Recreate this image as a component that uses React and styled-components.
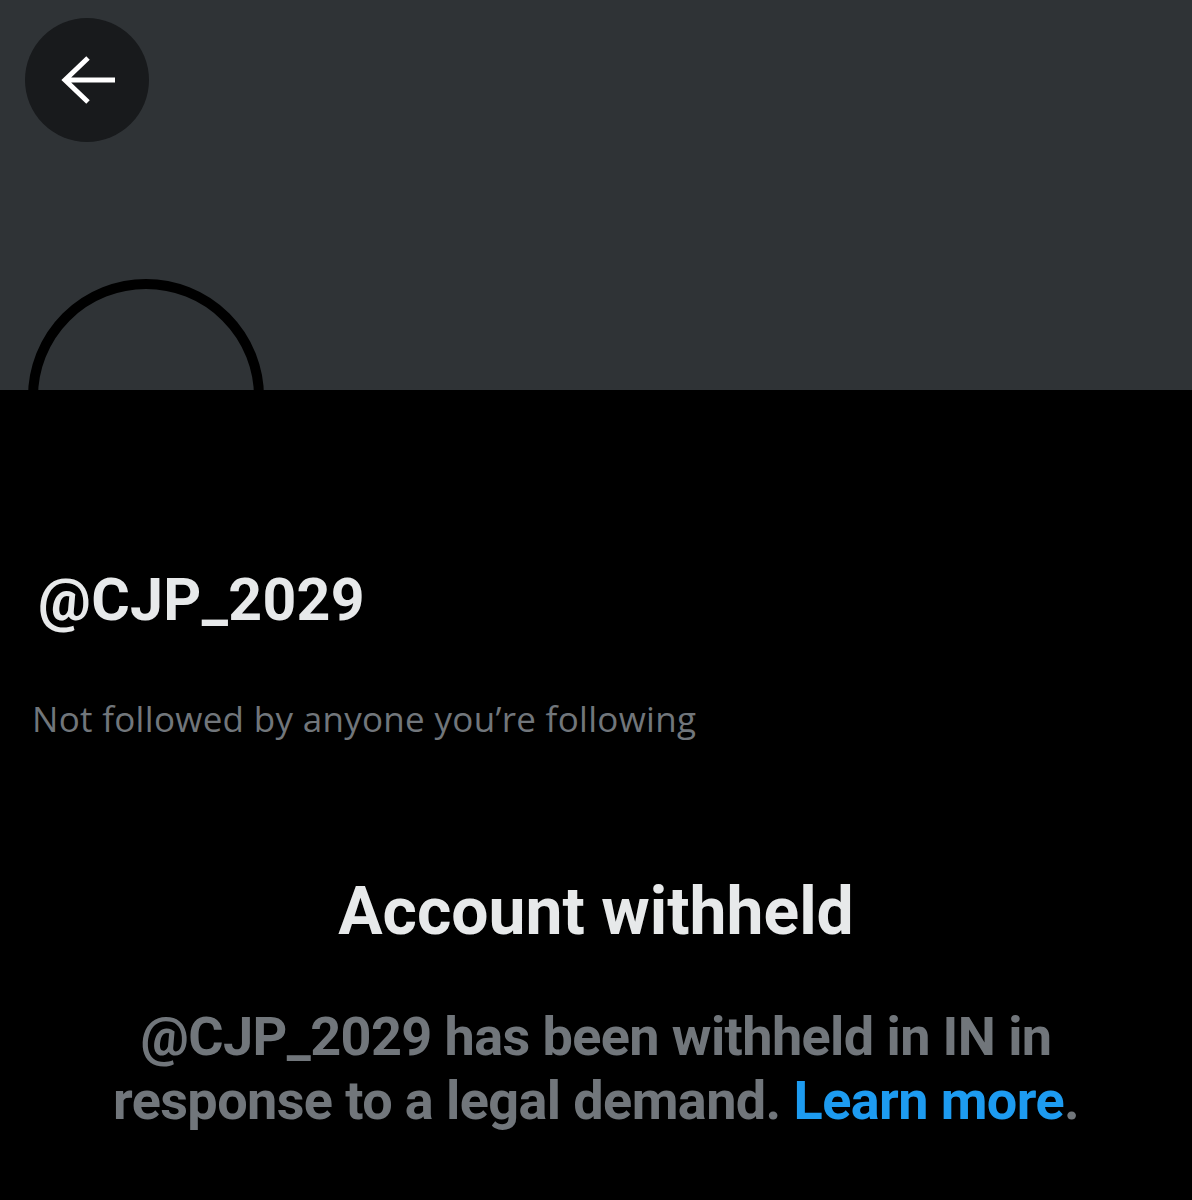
import React from 'react';
import styled, { createGlobalStyle } from 'styled-components';

const GlobalStyle = createGlobalStyle`
  html, body {
    margin: 0;
    padding: 0;
    background: #000000;
  }
  body {
    font-family: Roboto, "Liberation Sans", Arial, sans-serif;
    -webkit-font-smoothing: antialiased;
  }
`;

const Page = styled('div')({
  width: 1192,
  minHeight: 1200,
  background: '#000000',
  overflow: 'hidden',
});

const Banner = styled('header')({
  height: 390,
  background: '#2f3336',
  padding: '18px 25px',
  boxSizing: 'border-box',
});

const BackButton = styled('button')({
  display: 'flex',
  alignItems: 'center',
  justifyContent: 'center',
  width: 124,
  height: 124,
  padding: 0,
  border: 'none',
  borderRadius: '50%',
  background: '#181a1c',
  cursor: 'pointer',
});

const Profile = styled('section')({
  padding: '0 32px',
});

const Avatar = styled('div')({
  width: 236,
  height: 236,
  boxSizing: 'border-box',
  marginTop: -111,
  marginLeft: -4,
  borderRadius: '50%',
  border: '10px solid #000000',
  background: 'transparent',
});

const Handle = styled('h2')({
  margin: '52px 0 0 6px',
  fontSize: 59,
  fontWeight: 700,
  lineHeight: '66px',
  color: '#e7e9ea',
  letterSpacing: 0.3,
});

const FollowNote = styled('p')({
  margin: '66px 0 0',
  fontFamily: '"Open Sans", Roboto, sans-serif',
  fontSize: 35,
  fontWeight: 400,
  lineHeight: '40px',
  color: '#71767b',
  letterSpacing: 0.3,
});

const Notice = styled('section')({
  display: 'flex',
  flexDirection: 'column',
  alignItems: 'center',
  marginTop: 137,
  padding: '0 90px',
  textAlign: 'center',
});

const NoticeTitle = styled('h1')({
  margin: 0,
  fontSize: 66,
  fontWeight: 700,
  lineHeight: '72px',
  color: '#e7e9ea',
});

const NoticeBody = styled('p')({
  margin: '57px 0 0',
  fontSize: 54,
  fontWeight: 700,
  lineHeight: '64px',
  color: '#71767b',
  letterSpacing: -0.6,
});

const LearnMore = styled('a')({
  color: '#1d9bf0',
  textDecoration: 'none',
});

const BackArrow = () => (
  <svg width="60" height="60" viewBox="0 0 60 60" fill="none">
    <path
      d="M58 30H7M31 8L8 30l23 22"
      stroke="#ffffff"
      strokeWidth="5"
      strokeLinecap="butt"
    />
  </svg>
);

const App = () => (
  <Page>
    <GlobalStyle />
    <Banner>
      <BackButton aria-label="Back">
        <BackArrow />
      </BackButton>
    </Banner>
    <Profile>
      <Avatar />
      <Handle>@CJP_2029</Handle>
      <FollowNote>Not followed by anyone you’re following</FollowNote>
    </Profile>
    <Notice>
      <NoticeTitle>Account withheld</NoticeTitle>
      <NoticeBody>
        @CJP_2029 has been withheld in IN in response to a legal demand.{' '}
        <LearnMore href="#">Learn more</LearnMore>.
      </NoticeBody>
    </Notice>
  </Page>
);

export default App;
